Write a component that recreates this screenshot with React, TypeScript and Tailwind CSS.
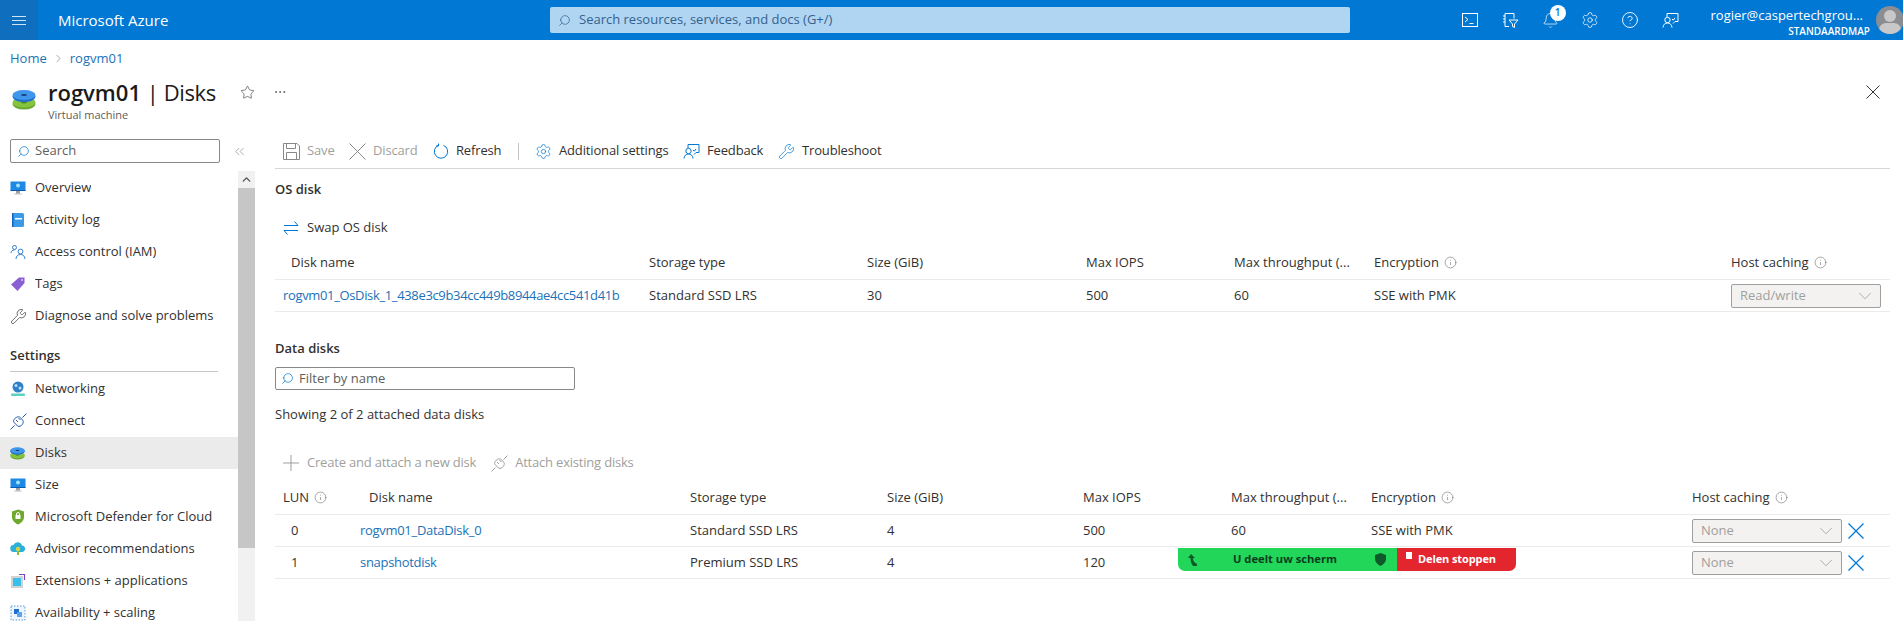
import React from 'react';
import { ChevronDown, ChevronUp, ChevronRight, ChevronsLeft, Search, Star, Ellipsis, Settings, Wrench, Info, Bell, CircleHelp } from 'lucide-react';

function DiskIcon({ size = 24 }: { size?: number }) {
  return (
    <svg width={size} height={size} viewBox="0 0 24 24">
      <ellipse cx="12" cy="16" rx="11.5" ry="5.5" fill="#6aa82f" />
      <ellipse cx="12" cy="14.5" rx="11.5" ry="5" fill="#86c440" />
      <ellipse cx="12" cy="14.5" rx="3" ry="1" fill="#4f8a1f" />
      <ellipse cx="12" cy="8.5" rx="11.5" ry="5.5" fill="#1f6fd0" />
      <ellipse cx="12" cy="7" rx="11.5" ry="5" fill="#3f96ea" />
      <ellipse cx="12" cy="7" rx="3" ry="1" fill="#123f7a" />
    </svg>
  );
}

function VmIcon() {
  return (
    <svg width="16" height="16" viewBox="0 0 16 16">
      <rect x="0.5" y="1.5" width="15" height="9.5" fill="#1e88e5" />
      <rect x="0.5" y="10" width="15" height="1" fill="#0b5cad" />
      <rect x="6" y="11" width="4" height="2.5" fill="#9aa0a6" />
      <rect x="4.5" y="13.5" width="7" height="1" fill="#b5b9bd" />
      <circle cx="8" cy="5.5" r="2" fill="#9fe3f5" />
    </svg>
  );
}

function FeedbackIcon({ color }: { color: string }) {
  return (
    <svg width="17" height="17" viewBox="0 0 17 17" fill="none" stroke={color} strokeWidth="1">
      <path d="M5 5V1.500h11v8h-3l-2 2" />
      <circle cx="5.500" cy="8" r="2.700" />
      <path d="M1 15.500c.3-3 2-4.500 4.500-4.500s4.200 1.500 4.500 4.500" />
      <path d="M10 7l1.200 1.200L13 6" />
    </svg>
  );
}

function XMark({ size, color, width = 1 }: { size: number; color: string; width?: number }) {
  return (
    <svg width={size} height={size} viewBox={`0 0 ${size} ${size}`} fill="none" stroke={color} strokeWidth={width} className="shrink-0">
      <path d={`M0.5 0.5L${size - 0.5} ${size - 0.5}M${size - 0.5} 0.5L0.5 ${size - 0.5}`} />
    </svg>
  );
}

function PlugIcon({ color, size = 17 }: { color: string; size?: number }) {
  return (
    <svg width={size} height={size} viewBox="0 0 17 17" fill="none" stroke={color} strokeWidth="1">
      <path d="M0.500 16.500L4.500 12.500" />
      <path d="M16.500 0.500L12.500 4.500" />
      <path d="M3.800 9.200l4 4c1.500.6 3.500-.2 4.500-1.700 1-1.400 1.200-3.100.7-4.100l-3.400-3.400c-1.200-.5-3 0-4.400 1.200-1.400 1.300-2 3-1.400 4z" />
      <path d="M6 7l2 2M8.500 5l2 2" />
    </svg>
  );
}

function SaveIcon() {
  return (
    <svg width="17" height="17" viewBox="0 0 17 17" fill="none" stroke="#8a8886" strokeWidth="1" className="shrink-0">
      <path d="M0.500 0.500h13.500l2.500 2.500v13.500H0.500z" />
      <path d="M3.500 0.500v5h9v-5" />
      <path d="M3.500 16.500v-7h10v7" />
    </svg>
  );
}

function RefreshIcon() {
  return (
    <svg width="16" height="16" viewBox="0 0 16 16" fill="none" stroke="#0078d4" strokeWidth="1" className="shrink-0">
      <path d="M10.500 2.300a6.700 6.700 0 1 1-5 0" />
      <path d="M5.500 0.500v2.500H3" />
    </svg>
  );
}

function SwapIcon() {
  return (
    <svg width="16" height="16" viewBox="0 0 16 16" fill="none" stroke="#0078d4" strokeWidth="1" className="shrink-0">
      <path d="M1 5.500h14M11.500 1.500l3.500 4" />
      <path d="M15 10.500H1M4.500 14.500l-3.500-4" />
    </svg>
  );
}

function SidebarIcon({ name }: { name: string }) {
  switch (name) {
    case 'Overview':
    case 'Size':
      return <VmIcon />;
    case 'Activity log':
      return (
        <svg width="16" height="16" viewBox="0 0 16 16">
          <rect x="2" y="1" width="12" height="14" rx="1.5" fill="#3b9be8" />
          <rect x="2" y="1" width="1.5" height="14" fill="#1565c0" />
          <rect x="5" y="6" width="7" height="1.5" fill="#fff" />
        </svg>
      );
    case 'Access control (IAM)':
      return (
        <svg width="16" height="16" viewBox="0 0 16 16" fill="none" stroke="#2f80d0" strokeWidth="1">
          <circle cx="4.500" cy="3.500" r="2" />
          <circle cx="10.500" cy="7.500" r="2.400" />
          <path d="M1 9c0-2 1.500-3 3.500-3" />
          <path d="M6 15c.2-3 2-4.500 4.500-4.500S14.800 12 15 15" />
        </svg>
      );
    case 'Tags':
      return (
        <svg width="16" height="16" viewBox="0 0 16 16">
          <path d="M9 1.500h5.500V7L7.500 15 1 8.500z" fill="#8a5fd3" />
          <circle cx="12" cy="4" r="1" fill="#d9c8f5" />
        </svg>
      );
    case 'Diagnose and solve problems':
      return <Wrench size={17} strokeWidth={1} color="#333" />;
    case 'Networking':
      return (
        <svg width="16" height="16" viewBox="0 0 16 16">
          <circle cx="8" cy="6" r="5.500" fill="#2f7fc9" />
          <circle cx="6" cy="4.500" r="1.500" fill="#b9e0f7" />
          <circle cx="10" cy="7" r="1.500" fill="#b9e0f7" />
          <rect x="1" y="12.500" width="14" height="2.500" rx="1" fill="#5ecfc0" />
        </svg>
      );
    case 'Connect':
      return <PlugIcon color="#2257b5" />;
    case 'Disks':
      return <DiskIcon size={15} />;
    case 'Microsoft Defender for Cloud':
      return (
        <svg width="16" height="16" viewBox="0 0 16 16">
          <path d="M8 .5l6 2v5.500c0 3.500-3 6-6 7.500-3-1.500-6-4-6-7.500V2.500z" fill="#6ea92e" />
          <rect x="5.500" y="6" width="5" height="4" fill="#fff" />
          <path d="M6.500 6V5a1.500 1.500 0 013 0v1" fill="none" stroke="#fff" />
        </svg>
      );
    case 'Advisor recommendations':
      return (
        <svg width="16" height="16" viewBox="0 0 16 16">
          <path d="M4 11a3.500 3.500 0 01-.5-7A4.500 4.500 0 0112 4.500 3.300 3.300 0 0112.500 11z" fill="#2bb0d8" />
          <circle cx="8" cy="8" r="2.200" fill="#d8d242" />
          <rect x="7" y="10" width="2" height="4" fill="#8bbd3c" />
        </svg>
      );
    case 'Extensions + applications':
      return (
        <svg width="16" height="16" viewBox="0 0 16 16">
          <rect x="1" y="3" width="12" height="12" fill="#d2d2d2" />
          <rect x="3" y="5" width="8" height="8" fill="#38c0ea" />
          <path d="M9 1.500h5.500V7" fill="none" stroke="#7a45c4" strokeWidth="1.200" />
        </svg>
      );
    default:
      return (
        <svg width="16" height="16" viewBox="0 0 16 16">
          <rect x="1" y="1" width="14" height="14" fill="#eef5fc" stroke="#5a9bd8" strokeDasharray="1.500 1.500" />
          <rect x="4" y="4" width="5" height="5" fill="#1f6fd0" />
          <rect x="7" y="7" width="5" height="5" fill="#5aa5ea" />
        </svg>
      );
  }
}

const topItems = ['Overview', 'Activity log', 'Access control (IAM)', 'Tags', 'Diagnose and solve problems'];
const settingsItems = ['Networking', 'Connect', 'Disks', 'Size', 'Microsoft Defender for Cloud', 'Advisor recommendations', 'Extensions + applications', 'Availability + scaling'];

function NavRow({ name }: { name: string }) {
  return (
    <div className={`flex h-8 items-center pl-[10px] ${name === 'Disks' ? 'bg-[#ebebeb]' : ''}`}>
      <span className="flex w-[25px] shrink-0 items-center"><SidebarIcon name={name} /></span>
      <span className="truncate">{name}</span>
    </div>
  );
}

function Sidebar() {
  return (
    <aside className="flex h-[485px] w-[255px] shrink-0 flex-col overflow-hidden pt-[3px]">
      <div className="flex h-[33px] shrink-0 items-start pl-[10px]">
        <div className="flex h-6 w-[210px] items-center rounded-[2px] border border-[#8a8886] pl-[6px] text-[#605e5c]">
          <Search size={13} strokeWidth={1.300} color="#0078d4" className="mr-[5px] -scale-x-100" />
          Search
        </div>
        <ChevronsLeft size={15} strokeWidth={1} color="#777" className="ml-[12px] mt-[5px]" />
      </div>
      <div className="-mt-px flex min-h-0 flex-1">
        <div className="w-[238px] shrink-0 pt-px">
          {topItems.map((n) => <NavRow key={n} name={n} />)}
          <div className="mt-[9px] flex h-[30px] items-center pl-[10px] font-semibold text-[#323130]">Settings</div>
          <div className="mb-px ml-[10px] mr-[20px] h-px bg-[#c8c6c4]" />
          <div>
            {settingsItems.map((n) => <NavRow key={n} name={n} />)}
          </div>
        </div>
        <div className="flex w-[17px] shrink-0 flex-col bg-[#f1f1f1]">
          <div className="flex h-[17px] items-center justify-center"><ChevronUp size={13} strokeWidth={2.500} color="#505050" /></div>
          <div className="h-[360px] bg-[#c6c6c6]" />
        </div>
      </div>
    </aside>
  );
}

function ToolBtn({ icon, label, off, cls }: { icon: React.ReactNode; label: string; off?: boolean; cls: string }) {
  return (
    <div className={`flex items-center ${cls} ${off ? 'gap-[7px] text-[#a19f9d]' : 'gap-[7px]'}`}>
      {icon}
      <span className="tracking-[-0.15px]">{label}</span>
    </div>
  );
}

function Toolbar() {
  return (
    <div className="flex h-[33px] items-center border-b border-[#d6d6d6] pb-[2px] pl-[8px]">
      <ToolBtn off cls="w-[66px]" label="Save" icon={<SaveIcon />} />
      <ToolBtn off cls="w-[84px]" label="Discard" icon={<XMark size={17} color="#8a8886" />} />
      <ToolBtn cls="w-[85px]" label="Refresh" icon={<RefreshIcon />} />
      <div className="mr-[16px] h-[17px] w-px bg-[#c8c6c4]" />
      <ToolBtn cls="w-[148px]" label="Additional settings" icon={<Settings size={17} strokeWidth={1} color="#0078d4" />} />
      <ToolBtn cls="w-[95px]" label="Feedback" icon={<FeedbackIcon color="#0078d4" />} />
      <ToolBtn cls="" label="Troubleshoot" icon={<Wrench size={17} strokeWidth={1} color="#0078d4" />} />
    </div>
  );
}

function InfoLabel({ label }: { label: string }) {
  return (
    <span className="flex items-center gap-[5px]">
      {label}
      <Info size={13} strokeWidth={1} color="#605e5c" />
    </span>
  );
}

function CacheSelect({ value }: { value: string }) {
  return (
    <div className="flex h-6 w-[150px] shrink-0 items-center justify-between rounded-[2px] border border-[#a19f9d] bg-[#f3f2f1] pl-2 pr-[4px] text-[#a19f9d]">
      {value}
      <ChevronDown size={22} strokeWidth={0.700} color="#8a8886" />
    </div>
  );
}

function OsTable() {
  return (
    <div className="mt-[10px]">
      <div className="grid h-[32px] grid-cols-[374px_218px_219px_148px_140px_357px_1fr] items-center border-b border-[#ebebeb] pb-[2px] text-[#323130]">
        <span className="pl-[16px]">Disk name</span>
        <span>Storage type</span>
        <span>Size (GiB)</span>
        <span>Max IOPS</span>
        <span>Max throughput (...</span>
        <InfoLabel label="Encryption" />
        <InfoLabel label="Host caching" />
      </div>
      <div className="grid h-[32px] grid-cols-[374px_218px_219px_148px_140px_357px_1fr] items-center border-b border-[#ebebeb]">
        <span className="pl-[8px] tracking-[-0.35px] text-[#1b72b8]">rogvm01_OsDisk_1_438e3c9b34cc449b8944ae4cc541d41b</span>
        <span>Standard SSD LRS</span>
        <span>30</span>
        <span>500</span>
        <span>60</span>
        <span>SSE with PMK</span>
        <CacheSelect value="Read/write" />
      </div>
    </div>
  );
}

function DataRow({ lun, name, storage, iops, tp, enc }: { lun: string; name: string; storage: string; iops: string; tp?: string; enc?: string }) {
  return (
    <div className="grid h-[32px] grid-cols-[85px_330px_197px_196px_148px_140px_321px_1fr] items-center border-b border-[#ebebeb] pt-px">
      <span className="pl-[16px]">{lun}</span>
      <span className="tracking-[-0.3px] text-[#1b72b8]">{name}</span>
      <span>{storage}</span>
      <span>4</span>
      <span>{iops}</span>
      <span>{tp}</span>
      <span>{enc}</span>
      <span className="flex items-center">
        <CacheSelect value="None" />
        <span className="ml-[6px]"><XMark size={16} color="#0078d4" width={1.300} /></span>
      </span>
    </div>
  );
}

function ShareBar() {
  return (
    <div className="absolute left-[1178px] top-[548px] flex h-[23px] w-[338px] text-[11px] font-bold">
      <div className="flex w-[219px] items-center rounded-bl-[7px] bg-[#22d65a] pl-[10px] text-[#0b3d1d]">
        <svg width="10" height="12" viewBox="0 0 10 12" fill="#0e5a2b"><path d="M3 0l4 4H5c0 3 1 4 4 6v2H5C3 9 2.500 7 2.500 4H0z" /></svg>
        <span className="ml-[35px] whitespace-nowrap text-[11.200px]">U deelt uw scherm</span>
        <svg className="ml-[38px] shrink-0" width="11" height="13" viewBox="0 0 11 13" fill="#0e5a2b"><path d="M5.500 0L11 2v4c0 3-2.500 5.500-5.500 7C2.500 11.500 0 9 0 6V2z" /></svg>
      </div>
      <div className="flex flex-1 items-start rounded-br-[7px] bg-[#e3262e] pl-[9px] pt-[3px] tracking-[-0.1px] text-white">
        <span className="mr-[6px] mt-[1px] h-[7px] w-[6px] bg-white" />
        Delen stoppen
      </div>
    </div>
  );
}

function HeaderIcon({ children }: { children: React.ReactNode }) {
  return <div className="flex w-[40px] shrink-0 justify-center">{children}</div>;
}

export default function App() {
  return (
    <div className="relative h-[621px] overflow-hidden bg-white text-[13px] text-[#323130]" style={{ fontFamily: '"Open Sans", "Noto Sans", sans-serif' }}>
      <header className="flex h-10 items-center overflow-hidden bg-[#0078d4] text-white">
        <div className="flex h-10 w-[38px] shrink-0 items-center justify-center bg-[#106ebe]">
          <div className="flex w-[14px] flex-col gap-[3px]">
            <span className="h-px bg-[#cfe4f6]" />
            <span className="h-px bg-[#cfe4f6]" />
            <span className="h-px bg-[#cfe4f6]" />
          </div>
        </div>
        <span className="ml-[20px] w-[492px] shrink-0 text-[15px]">Microsoft Azure</span>
        <div className="flex h-[26px] w-[800px] shrink-0 items-center rounded-[2px] bg-[#afd5f3] pl-[8px] text-[#35618c]">
          <Search size={13} strokeWidth={1.300} color="#35618c" className="mr-[8px] -scale-x-100" />
          Search resources, services, and docs (G+/)
        </div>
        <div className="ml-[100px] flex shrink-0 items-center">
          <HeaderIcon>
            <svg width="16" height="16" viewBox="0 0 16 16" fill="none" stroke="#fff" strokeWidth="1">
              <rect x="0.500" y="1.500" width="15" height="13" />
              <path d="M3 5l3 2.500L3 10M7.500 11.500h4" />
            </svg>
          </HeaderIcon>
          <HeaderIcon>
            <svg width="17" height="17" viewBox="0 0 17 17" fill="none" stroke="#fff" strokeWidth="1">
              <path d="M3 1.500h9v5M3 1.500v13h4M1 4h2M1 7h2M1 10h2" />
              <path d="M7 8h9l-3.500 4v3.500l-2-1V12z" />
            </svg>
          </HeaderIcon>
          <HeaderIcon>
            <div className="relative">
              <Bell size={17} strokeWidth={1} />
              <span className="absolute -right-[7px] -top-[7px] flex h-4 w-4 items-center justify-center rounded-full bg-white text-[10px] font-semibold text-[#0078d4]">1</span>
            </div>
          </HeaderIcon>
          <HeaderIcon><Settings size={18} strokeWidth={1} /></HeaderIcon>
          <HeaderIcon><CircleHelp size={18} strokeWidth={1.200} /></HeaderIcon>
          <HeaderIcon><FeedbackIcon color="#fff" /></HeaderIcon>
        </div>
        <div className="mt-[4px] flex w-[180px] shrink-0 flex-col items-end">
          <span className="pr-[7px] text-[13px] leading-[17px]">rogier@caspertechgrou...</span>
          <span className="text-[10px] font-semibold leading-[14px]">STANDAARDMAP</span>
        </div>
        <div className="relative ml-[6px] h-7 w-7 shrink-0 overflow-hidden rounded-full bg-[#8a8d91]">
          <span className="absolute left-[8px] top-[4px] h-[12px] w-[12px] rounded-full bg-[#c8c8c8]" />
          <span className="absolute left-[3px] top-[17px] h-[14px] w-[22px] rounded-full bg-[#c8c8c8]" />
        </div>
      </header>

      <div className="flex h-[31px] items-end pl-[10px] text-[#1b72b8]">
        <span className="leading-[25px]">Home</span>
        <ChevronRight size={13} strokeWidth={1} color="#605e5c" className="mx-[5px] mb-[6px]" />
        <span className="leading-[25px]">rogvm01</span>
      </div>

      <div className="relative flex h-[65px] items-start pl-[12px]">
        <span className="mt-[17px] shrink-0"><DiskIcon size={24} /></span>
        <div className="ml-[12px] w-[180px] shrink-0 pt-[7px]">
          <div className="whitespace-nowrap text-[22px] font-semibold leading-[28px] text-[#1b1a19]">rogvm01 <span className="font-normal tracking-[-0.4px]">| Disks</span></div>
          <div className="text-[11px] leading-[18px] text-[#605e5c]">Virtual machine</div>
        </div>
        <Star size={15} strokeWidth={1} color="#333" className="ml-[12px] mt-[14px]" />
        <Ellipsis size={14} strokeWidth={1} color="#333" className="ml-[18px] mt-[14px]" />
        <span className="absolute right-[23px] top-[14px]"><XMark size={14} color="#333" /></span>
      </div>

      <div className="flex">
        <Sidebar />
        <main className="min-w-0 flex-1 pl-[20px] pr-[13px]">
          <Toolbar />
          <h2 className="mt-[11px] text-[13px] font-semibold leading-[18px]">OS disk</h2>
          <div className="mt-[20px] flex h-[20px] items-center gap-[8px] pl-[8px]">
            <SwapIcon />
            Swap OS disk
          </div>
          <OsTable />
          <h2 className="mt-[27px] text-[13px] font-semibold leading-[18px]">Data disks</h2>
          <div className="mt-[10px] flex h-[23px] w-[300px] items-center rounded-[2px] border border-[#8a8886] pl-[5px] text-[#605e5c]">
            <Search size={13} strokeWidth={1.300} color="#0078d4" className="mr-[5px] -scale-x-100" />
            Filter by name
          </div>
          <p className="mt-[15px] leading-[18px]">Showing 2 of 2 attached data disks</p>
          <div className="mt-[30px] flex h-[20px] items-center pl-[8px] tracking-[-0.2px] text-[#a19f9d]">
            <svg width="16" height="16" viewBox="0 0 16 16" stroke="#a19f9d" className="mr-[8px]"><path d="M8 0v16M0 8h16" /></svg>
            Create and attach a new disk
            <span className="ml-[15px] mr-[7px]"><PlugIcon color="#a19f9d" /></span>
            Attach existing disks
          </div>
          <div className="mt-[10px] grid h-[32px] grid-cols-[85px_330px_197px_196px_148px_140px_321px_1fr] items-center border-b border-[#ebebeb] pb-[2px]">
            <span className="pl-[8px]"><InfoLabel label="LUN" /></span>
            <span className="pl-[9px]">Disk name</span>
            <span>Storage type</span>
            <span>Size (GiB)</span>
            <span>Max IOPS</span>
            <span>Max throughput (...</span>
            <InfoLabel label="Encryption" />
            <InfoLabel label="Host caching" />
          </div>
          <div>
            <DataRow lun="0" name="rogvm01_DataDisk_0" storage="Standard SSD LRS" iops="500" tp="60" enc="SSE with PMK" />
            <DataRow lun="1" name="snapshotdisk" storage="Premium SSD LRS" iops="120" />
          </div>
        </main>
      </div>
      <ShareBar />
    </div>
  );
}
